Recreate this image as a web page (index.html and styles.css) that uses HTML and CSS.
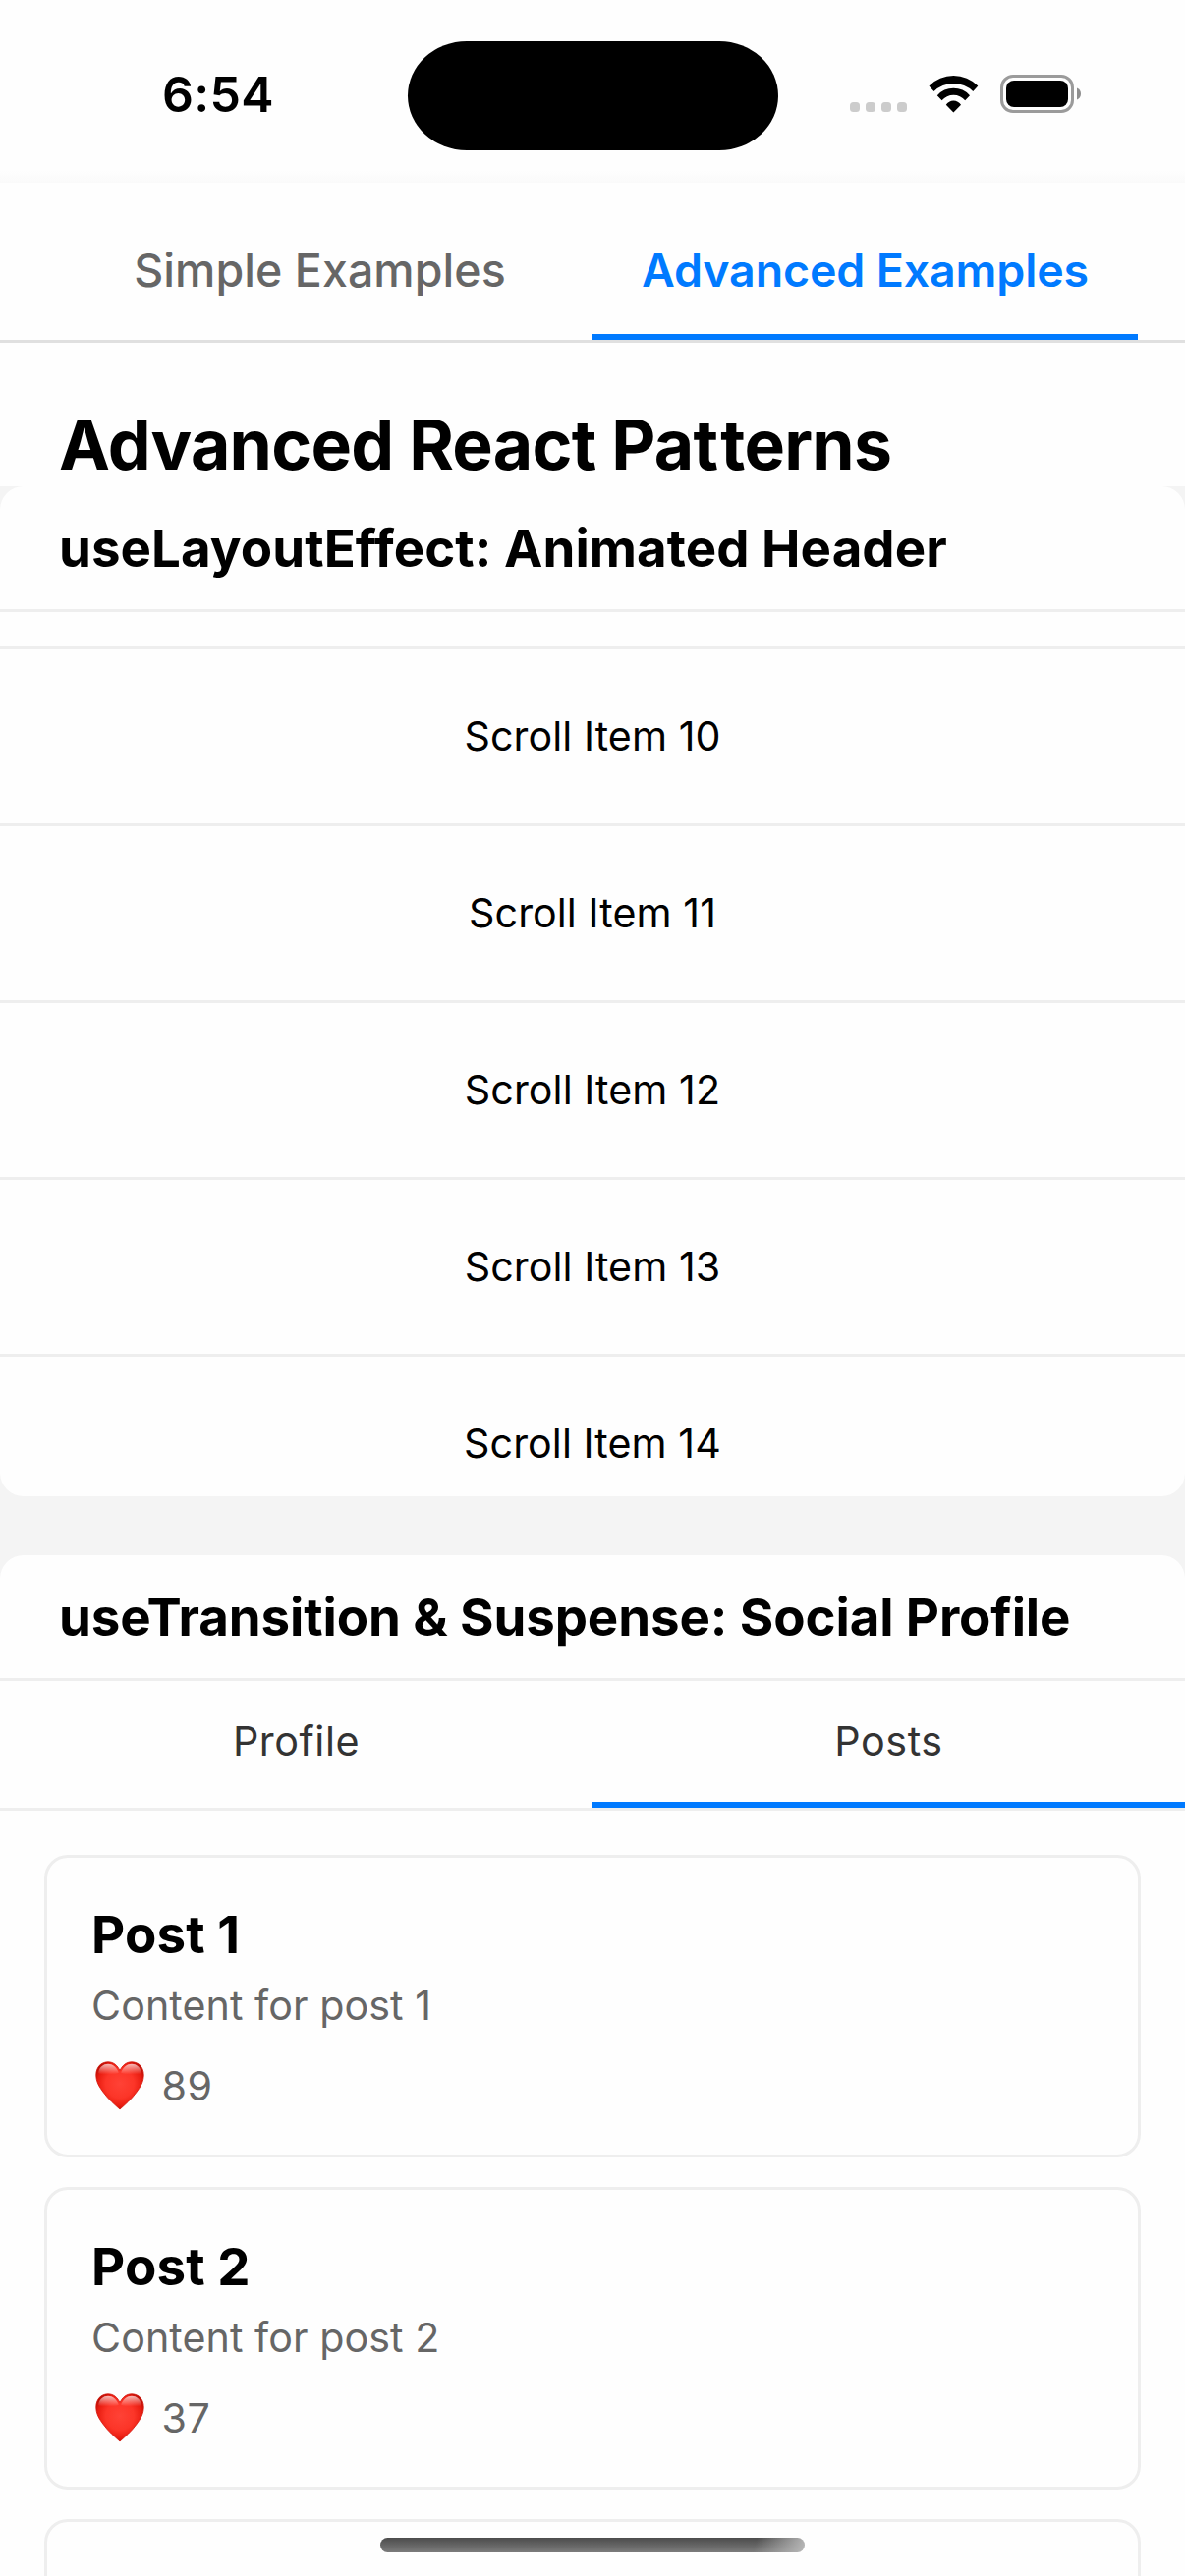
FILE: index.html
```
<!DOCTYPE html>
<html lang="en">
<head>
<meta charset="utf-8">
<title>Advanced React Patterns</title>
<link rel="stylesheet" href="styles.css">
</head>
<body>
<svg class="defs" width="0" height="0" aria-hidden="true">
  <defs>
    <radialGradient id="heart-fill" cx="50%" cy="46%" r="60%">
      <stop offset="0" stop-color="#ff4236"/>
      <stop offset="0.5" stop-color="#fc3528"/>
      <stop offset="0.78" stop-color="#e81c10"/>
      <stop offset="1" stop-color="#a80a03"/>
    </radialGradient>
    <linearGradient id="heart-shine" x1="0" y1="0" x2="0" y2="1">
      <stop offset="0" stop-color="#fff" stop-opacity="0.7"/>
      <stop offset="1" stop-color="#fff" stop-opacity="0"/>
    </linearGradient>
    <symbol id="heart" viewBox="0 0 50 50">
      <path fill="url(#heart-fill)" stroke="#d3140a" stroke-width="0.8" d="M25 49C19 43.500 13.500 39 8.500 32C3.500 25.500 0.800 20.500 0.800 14C0.800 6 6 0.800 13 0.800C18.800 0.800 22.500 4.500 25 9.500C27.500 4.500 31.200 0.800 37 0.800C44 0.800 49.200 6 49.200 14C49.200 20.500 46.500 25.500 41.500 32C36.500 39 31 43.500 25 49Z"/>
      <path fill="url(#heart-shine)" d="M3.200 12C3.800 6.200 8 2.800 13 2.800C17.800 2.800 21.500 6 23.800 11.500C22 13.500 18 13 13 13C8.500 13 4.500 14 3.200 12ZM46.800 12C46.200 6.200 42 2.800 37 2.800C32.200 2.800 28.500 6 26.200 11.500C28 13.500 32 13 37 13C41.500 13 45.500 14 46.800 12Z"/>
    </symbol>
  </defs>
</svg>

<div class="screen">
  <header class="status">
    <span class="time">6:54</span>
    <span class="island"></span>
    <span class="indicators">
      <span class="dots"><i></i><i></i><i></i><i></i></span>
      <svg class="wifi" width="51" height="38" viewBox="0 0 51 38">
        <path d="M0.500 10.500A35 35 0 0 1 50.300 10.500L45.300 16A28.800 28.800 0 0 0 5.500 16ZM8.800 20.200A22 22 0 0 1 42 20.200L37.200 25.300A15.400 15.400 0 0 0 13.600 25.300ZM17.800 29.700A9 9 0 0 1 33 29.700L25.400 37.400Z"/>
      </svg>
      <svg class="battery" width="83" height="39" viewBox="0 0 83 39">
        <rect x="1.500" y="1.500" width="72" height="36" rx="11.500" fill="none" stroke="#9b9b9b" stroke-width="3"/>
        <rect x="6" y="6" width="63" height="27" rx="8"/>
        <path fill="#8f8f8f" d="M78 13.500C80.600 14.500 82 16.800 82 19.500C82 22.200 80.600 24.500 78 25.500Z"/>
      </svg>
    </span>
  </header>

  <nav class="main-tabs">
    <span class="main-tab">Simple Examples</span>
    <span class="main-tab main-tab-active">Advanced Examples</span>
  </nav>

  <h1 class="page-title">Advanced React Pa<span class="loose">t</span>terns</h1>

  <section class="card">
    <h2 class="card-title card-title-layout">useLayoutEffect: Animated Header</h2>
    <div class="scroll-list">
      <div class="scroll-item scroll-item-partial"></div>
      <div class="scroll-item">Scroll Item 10</div>
      <div class="scroll-item">Scroll Item 11</div>
      <div class="scroll-item">Scroll Item 12</div>
      <div class="scroll-item">Scroll Item 13</div>
      <div class="scroll-item">Scroll Item 14</div>
    </div>
  </section>

  <section class="card">
    <h2 class="card-title">useTransition &amp; Suspense: Social Profile</h2>
    <div class="sub-tabs">
      <span class="sub-tab">Profile</span>
      <span class="sub-tab sub-tab-active">Posts</span>
    </div>
    <div class="posts">
      <article class="post">
        <h3 class="post-title">Post 1</h3>
        <p class="post-body">Content for post 1</p>
        <div class="likes"><svg class="heart" width="50" height="50"><use href="#heart"/></svg><span>89</span></div>
      </article>
      <article class="post">
        <h3 class="post-title">Post 2</h3>
        <p class="post-body">Content for post 2</p>
        <div class="likes"><svg class="heart" width="50" height="50"><use href="#heart"/></svg><span>37</span></div>
      </article>
      <article class="post"></article>
    </div>
  </section>
  <div class="home-indicator"></div>
</div>
</body>
</html>
```

FILE: styles.css
```
* {
  box-sizing: border-box;
}

body {
  margin: 0;
  background: #f4f4f4;
  color: #000;
  font-family: Inter, "Liberation Sans", sans-serif;
  font-variant-ligatures: none;
}

.defs {
  position: absolute;
}

.screen {
  position: relative;
  width: 1206px;
  height: 2622px;
  overflow: hidden;
}

/* Status bar */
.status {
  display: grid;
  grid-template-columns: 414.5px 377px 1fr;
  height: 186px;
  background: linear-gradient(#fefefe 0, #fefefe 174px, #fafafa 186px);
}

.time {
  padding: 66px 0 0 165px;
  font-size: 50px;
  font-weight: 600;
  line-height: 60px;
  letter-spacing: 0.3px;
}

.island {
  height: 111px;
  margin-top: 41.5px;
  border-radius: 60px / 55.5px;
  background: #000;
}

.indicators {
  display: flex;
  align-items: flex-start;
  padding: 76px 0 0 73.5px;
}

.dots {
  display: flex;
  gap: 6px;
  padding-top: 28px;
}

.dots i {
  width: 10px;
  height: 10px;
  border-radius: 3.5px;
  background: #ccc;
}

.wifi {
  margin: 1px 0 0 22px;
}

.battery {
  margin-left: 22px;
}

/* Top-level tabs */
.main-tabs {
  display: flex;
  height: 163px;
  padding: 0 48px;
  border-bottom: 3px solid #e0e0e0;
  background: #fefefe;
}

.main-tab {
  flex: 1;
  padding-top: 60px;
  border-bottom: 6px solid transparent;
  color: #666;
  font-size: 46.5px;
  font-weight: 500;
  line-height: 58px;
  text-align: center;
  letter-spacing: 0.06px;
}

.main-tab-active {
  border-color: #007aff;
  color: #007aff;
  font-weight: 600;
  letter-spacing: -0.137px;
}

.page-title {
  height: 146px;
  margin: 0;
  padding: 61px 60px 0;
  background: #fefefe;
  font-size: 69.7px;
  font-weight: 700;
  line-height: 86px;
  letter-spacing: -0.76px;
}

.page-title .loose {
  letter-spacing: 2.4px;
}

/* Cards */
.card {
  margin-bottom: 60px;
  border-radius: 24px;
  background: #fefefe;
  overflow: hidden;
}

.card-title {
  margin: 0;
  padding: 31px 60px 29px;
  border-bottom: 3px solid #eee;
  font-size: 52.8px;
  font-weight: 700;
  line-height: 65px;
  letter-spacing: -0.1px;
  white-space: nowrap;
}

.card-title-layout {
  letter-spacing: 0.07px;
}

.scroll-list {
  height: 900px;
  overflow: hidden;
}

.scroll-item {
  display: flex;
  align-items: center;
  justify-content: center;
  height: 180px;
  padding-bottom: 2px;
  border-bottom: 3px solid #eee;
  font-size: 41.2px;
  letter-spacing: 0.07px;
}

.scroll-item-partial {
  height: 38px;
}

/* Profile / Posts tabs */
.sub-tabs {
  display: flex;
  height: 132px;
  border-bottom: 3px solid #eee;
}

.sub-tab {
  flex: 1;
  border-bottom: 6px solid transparent;
  color: #333;
  font-size: 41.3px;
  line-height: 123px;
  text-align: center;
  letter-spacing: 0.55px;
}

.sub-tab-active {
  border-color: #007aff;
}

/* Posts */
.posts {
  display: flex;
  flex-direction: column;
  gap: 30px;
  padding: 45px;
}

.post {
  height: 308px;
  padding: 46px 45px 44px;
  border: 3px solid #eee;
  border-radius: 24px;
}

.post-title {
  margin: 0 0 14px;
  font-size: 52.8px;
  font-weight: 700;
  line-height: 65px;
  letter-spacing: 0.15px;
}

.post-body {
  margin: 0 0 32px;
  color: #666;
  font-size: 41.2px;
  line-height: 50px;
  letter-spacing: 0.06px;
}

.likes {
  display: flex;
  gap: 17.5px;
  padding-left: 4px;
  color: #666;
  font-size: 41.2px;
  line-height: 50px;
  letter-spacing: 0.5px;
}

.home-indicator {
  position: absolute;
  left: 387px;
  bottom: 24px;
  width: 432px;
  height: 15px;
  border-radius: 7.5px;
  background:
    linear-gradient(105deg, transparent 88%, #b8b8b8 100%),
    linear-gradient(#4c4c4c, #7c7c7c);
}
```
